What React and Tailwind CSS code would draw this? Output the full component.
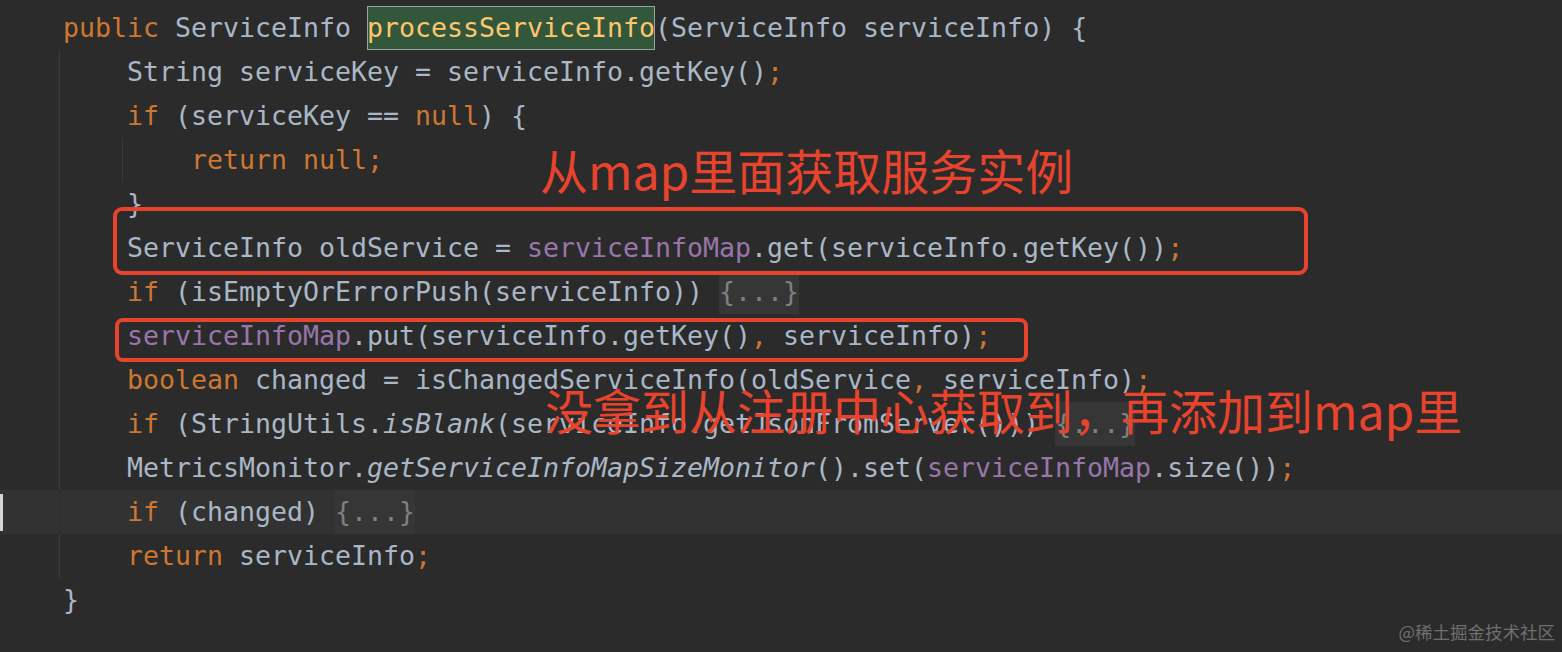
const KW = 'text-[#cc7832]'
const PURPLE = 'text-[#9876aa]'

function Fold() {
  return <span className="inline-block h-[44px] bg-[#363636] text-[#808080]">{'{...}'}</span>
}

function Line({ children, className = '' }) {
  return <div className={`h-[44px] whitespace-pre leading-[44px] ${className}`}>{children}</div>
}

function App() {
  return (
    <div className="relative h-[652px] w-[1562px] overflow-hidden bg-[#2b2b2b] font-['DejaVu_Sans_Mono',monospace] text-[26.58px] text-[#a9b7c6]">
      <div className="flex flex-col pt-[6px]">
        <Line className="pl-[63px]">
          <span className={KW}>public</span> ServiceInfo{' '}
          <span className="inline-block h-[44px] bg-[#32573b] text-[#ffc66d] shadow-[inset_0_0_0_1px_#97a59a]">processServiceInfo</span>
          (ServiceInfo serviceInfo) {'{'}
        </Line>

        <div className="ml-[59px] flex flex-col border-l border-[#3a3a3a] pl-[67px]">
          <Line>
            String serviceKey = serviceInfo.getKey()<span className={KW}>;</span>
          </Line>
          <Line>
            <span className={KW}>if</span> (serviceKey == <span className={KW}>null</span>) {'{'}
          </Line>
          <div className="-ml-[5px] border-l border-[#3a3a3a] pl-[68px]">
            <Line className={KW}>return null;</Line>
          </div>
          <Line>{'}'}</Line>
          <Line>
            ServiceInfo oldService = <span className={PURPLE}>serviceInfoMap</span>.get(serviceInfo.getKey())
            <span className={KW}>;</span>
          </Line>
          <Line>
            <span className={KW}>if</span> (isEmptyOrErrorPush(serviceInfo)) <Fold />
          </Line>
          <Line>
            <span className={PURPLE}>serviceInfoMap</span>.put(serviceInfo.getKey()<span className={KW}>,</span> serviceInfo)
            <span className={KW}>;</span>
          </Line>
          <Line>
            <span className={KW}>boolean</span> changed = isChangedServiceInfo(oldService<span className={KW}>,</span> serviceInfo)
            <span className={KW}>;</span>
          </Line>
          <Line>
            <span className={KW}>if</span> (StringUtils.<span className="italic">isBlank</span>(serviceInfo.getJsonFromServer())) <Fold />
          </Line>
          <Line>
            MetricsMonitor.<span className="italic">getServiceInfoMapSizeMonitor</span>().set(
            <span className={PURPLE}>serviceInfoMap</span>.size())<span className={KW}>;</span>
          </Line>

          {/* current line, spans the whole editor width */}
          <div className="-ml-[127px] flex h-[44px] w-[1562px] items-center bg-[#323232]">
            <div className="h-[37px] w-[3px] bg-[#d4d4d4]" />
            <div className="w-[56px]" />
            <div className="h-[44px] w-px bg-[#2c2c2c]" />
            <Line className="pl-[67px]">
              <span className={KW}>if</span> (changed) <Fold />
            </Line>
          </div>

          <Line>
            <span className={KW}>return</span> serviceInfo<span className={KW}>;</span>
          </Line>
        </div>

        <Line className="pl-[63px]">{'}'}</Line>
      </div>

      {/* annotations drawn over the code */}
      <div className="absolute left-[113px] top-[207px] h-[68px] w-[1195px] rounded-[9px] border-4 border-[#e8432d]" />
      <div className="absolute left-[115px] top-[318px] h-[44px] w-[913px] rounded-[8px] border-4 border-[#e8432d]" />

      <div className="absolute left-[540px] top-[141px] whitespace-nowrap font-['Noto_Sans_CJK_SC',sans-serif] text-[48px] leading-[56px] text-[#e8432d]">
        从map里面获取服务实例
      </div>
      <div className="absolute left-[545px] top-[381px] whitespace-nowrap font-['Noto_Sans_CJK_SC',sans-serif] text-[48px] leading-[56px] text-[#e8432d]">
        没拿到从注册中心获取到，再添加到map里
      </div>

      <div className="absolute right-[7px] bottom-[8px] font-['Noto_Sans_CJK_SC',sans-serif] text-[17.5px] leading-[24px] text-[#6f6f6f]">
        @稀土掘金技术社区
      </div>
    </div>
  )
}

export default App
